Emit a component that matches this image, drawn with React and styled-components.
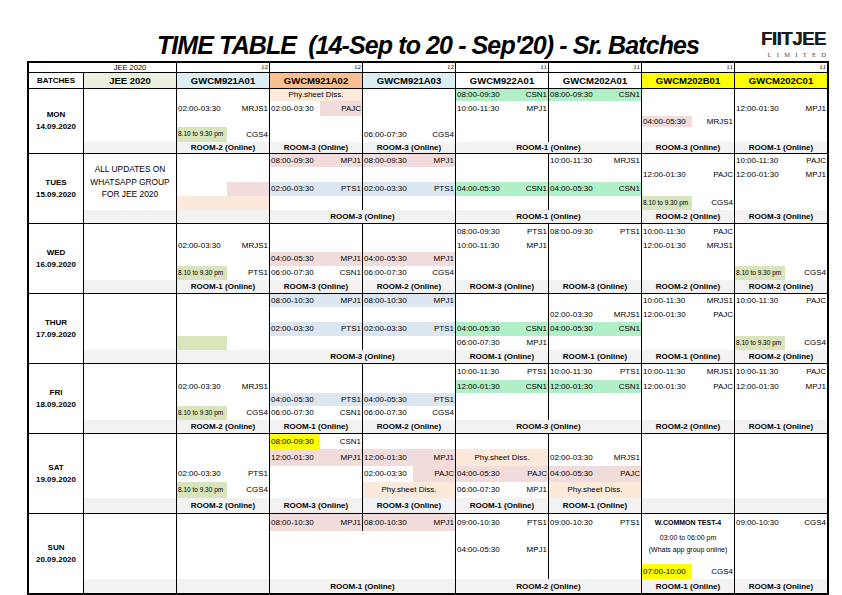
import React from 'react';
import styled, { createGlobalStyle } from 'styled-components';

const GlobalStyle = createGlobalStyle`
  html, body { margin: 0; padding: 0; background: #fff; }
  body { font-family: 'Liberation Sans', Arial, sans-serif; color: #000; }
  * { box-sizing: border-box; }
`;

const PINK = '#f2dcdb';
const BLUE = '#dce6f1';
const GREEN = '#b1efc6';
const PEACH = '#fde9d9';
const OLIVE = '#d7e4bc';
const YELLOW = '#ffff00';
const GREY = '#f2f2f2';
const LINE = '1px solid #000';

const COLS = '55px 93px 93px 93px 93px 93px 93px 93px 92px';

const Page = styled.div`
  width: 842px;
  height: 595px;
  overflow: hidden;
  padding-left: 27px;
`;

const TitleBar = styled.header`
  width: 802px;
  height: 61px;
  display: grid;
  grid-template-columns: 1fr auto 1fr;
`;

const Title = styled.h1`
  grid-column: 2;
  align-self: end;
  margin: 0 0 3px;
  font-size: 25px;
  line-height: 25px;
  font-weight: 700;
  font-style: italic;
  letter-spacing: -0.9px;
  white-space: pre;
`;

const Logo = styled.div`
  grid-column: 3;
  justify-self: end;
  align-self: start;
  margin: 30px 3px 0 0;
  display: flex;
  flex-direction: column;
  align-items: flex-end;
`;

const LogoMark = styled.span`
  font-size: 18.5px;
  line-height: 17px;
  font-weight: 700;
  letter-spacing: -0.4px;
  color: #1c1c1c;
  text-shadow: 0.3px 0 0 #1c1c1c;
`;

const LogoSub = styled.span`
  font-family: 'Liberation Serif', serif;
  font-size: 6.5px;
  line-height: 7px;
  letter-spacing: 5.3px;
  margin-top: 4px;
  margin-right: -5.3px;
  color: #444;
`;

const Table = styled.div`
  width: 802px;
  border: 2px solid #000;
`;

const TopRow = styled.div`
  display: grid;
  grid-template-columns: ${COLS};
  height: 10px;
  border-bottom: ${LINE};
`;

const TopCell = styled.div`
  border-right: ${(p) => (p.$line ? LINE : 'none')};
  font-family: 'Liberation Serif', serif;
  font-size: 7px;
  line-height: 9px;
  text-align: right;
  padding-right: 1px;
`;

const TopLabel = styled.div`
  border-right: ${LINE};
  font-size: 7.5px;
  line-height: 9px;
  text-align: center;
`;

const HeaderRow = styled.div`
  display: grid;
  grid-template-columns: ${COLS};
  height: 15px;
`;

const HeadCell = styled.div`
  display: flex;
  align-items: center;
  justify-content: center;
  background: ${(p) => p.$bg || '#fff'};
  border-right: ${(p) => (p.$last ? 'none' : LINE)};
  font-weight: 700;
  font-size: ${(p) => p.$size || 9.5}px;
  white-space: nowrap;
`;

const DayGrid = styled.section`
  display: grid;
  grid-template-columns: ${COLS};
  grid-template-rows: ${(p) => p.$rows};
  border-top: ${LINE};
`;

const DayCell = styled.div`
  grid-column: 1;
  grid-row: 1 / -1;
  border-right: ${LINE};
  display: flex;
  flex-direction: column;
  align-items: center;
  justify-content: center;
  font-weight: 700;
  font-size: 8px;
  line-height: 12px;
`;

const JeeCell = styled.div`
  grid-column: 2;
  grid-row: 1 / ${(p) => p.$end};
  border-right: ${LINE};
  display: flex;
  flex-direction: column;
  align-items: center;
  justify-content: center;
  font-size: 8.4px;
  line-height: 12.5px;
  text-align: center;
`;

const JeeRoom = styled.div`
  grid-column: 2;
  grid-row: ${(p) => p.$row};
  background: ${GREY};
  border-right: ${LINE};
`;

const BatchCol = styled.div`
  grid-column: ${(p) => p.$col};
  grid-row: 1 / ${(p) => p.$end};
  display: grid;
  grid-template-rows: ${(p) => p.$rows};
  min-width: 0;
`;

const Slot = styled.div`
  display: grid;
  grid-template-columns: 50px 1fr;
  background: ${(p) => p.$bg || 'transparent'};
  border-right: ${(p) => (p.$divider ? LINE : 'none')};
  overflow: hidden;
  min-height: 0;
`;

const TimePart = styled.span`
  display: flex;
  align-items: center;
  padding-left: 1px;
  background: ${(p) => p.$bg || 'transparent'};
  font-size: ${(p) => (p.$small ? '6.5px' : '8px')};
  line-height: 1;
  white-space: nowrap;
  overflow: hidden;
`;

const WhoPart = styled.span`
  display: flex;
  align-items: center;
  justify-content: flex-end;
  padding-right: 1px;
  background: ${(p) => p.$bg || 'transparent'};
  font-size: 8px;
  line-height: 1;
  white-space: nowrap;
`;

const Centered = styled.span`
  grid-column: 1 / -1;
  display: flex;
  align-items: center;
  justify-content: center;
  font-size: ${(p) => p.$size || 8}px;
  font-weight: ${(p) => (p.$bold ? 700 : 400)};
  line-height: 1;
  white-space: nowrap;
`;

const RoomCell = styled.div`
  grid-column: ${(p) => p.$start} / span ${(p) => p.$span};
  grid-row: ${(p) => p.$row};
  background: ${GREY};
  border-right: ${(p) => (p.$last ? 'none' : LINE)};
  display: flex;
  align-items: center;
  justify-content: center;
  font-weight: 700;
  font-size: 8px;
  white-space: nowrap;
`;

const T = (time, who, opt = {}) => ({ kind: 'time', time, who, ...opt });
const C = (text, opt = {}) => ({ kind: 'center', text, ...opt });
const OL = (who) => T('8.10 to 9.30 pm', who, { lb: OLIVE, small: true });
const R = (text, span = 1) => ({ text, span });
const col = (slots, div) => ({ slots, div });

const BATCHES = [
  { name: 'GWCM921A01', bg: '#daeef3', num: 12 },
  { name: 'GWCM921A02', bg: '#fabf8f', num: 12 },
  { name: 'GWCM921A03', bg: '#daeef3', num: 12 },
  { name: 'GWCM922A01', bg: '#fff', num: 11 },
  { name: 'GWCM202A01', bg: '#fff', num: 11 },
  { name: 'GWCM202B01', bg: YELLOW, num: 11 },
  { name: 'GWCM202C01', bg: YELLOW, num: 11 },
];

const DAYS = [
  {
    day: 'MON', date: '14.09.2020', rows: [12, 15, 11, 15, 11],
    cols: [
      col([null, T('02:00-03:30', 'MRJS1'), null, OL('CGS4')]),
      col([C('Phy.sheet Diss.', { bg: PEACH }), T('02:00-03:30', 'PAJC', { rb: PINK }), null, null]),
      col([null, null, null, T('06:00-07:30', 'CGS4')]),
      col([T('08:00-09:30', 'CSN1', { bg: GREEN }), T('10:00-11:30', 'MPJ1'), null, null]),
      col([T('08:00-09:30', 'CSN1', { bg: GREEN }), null, null, null]),
      col([null, null, T('04:00-05:30', 'MRJS1', { lb: PINK }), null]),
      col([null, T('12:00-01:30', 'MPJ1'), null, null]),
    ],
    rooms: [R('ROOM-2 (Online)'), R('ROOM-3 (Online)'), R('ROOM-3 (Online)'), R('ROOM-1 (Online)', 2), R('ROOM-3 (Online)'), R('ROOM-1 (Online)')],
  },
  {
    day: 'TUES', date: '15.09.2020', rows: [13, 15, 14, 14, 13],
    jee: ['ALL UPDATES ON', 'WHATSAPP GROUP', 'FOR JEE 2020'],
    cols: [
      col([null, null, T('', '', { rb: PINK }), T('', '', { bg: PEACH })]),
      col([T('08:00-09:30', 'MPJ1', { bg: PINK }), null, T('02:00-03:30', 'PTS1', { bg: BLUE }), null]),
      col([T('08:00-09:30', 'MPJ1', { bg: PINK }), null, T('02:00-03:30', 'PTS1', { bg: BLUE }), null]),
      col([null, null, T('04:00-05:30', 'CSN1', { bg: GREEN }), null]),
      col([T('10:00-11:30', 'MRJS1'), null, T('04:00-05:30', 'CSN1', { bg: GREEN }), null]),
      col([null, T('12:00-01:30', 'PAJC'), null, OL('CGS4')]),
      col([T('10:00-11:30', 'PAJC'), T('12:00-01:30', 'MPJ1'), null, null]),
    ],
    rooms: [R(''), R('ROOM-3 (Online)', 2), R('ROOM-1 (Online)', 2), R('ROOM-2 (Online)'), R('ROOM-3 (Online)')],
  },
  {
    day: 'WED', date: '16.09.2020', rows: [15, 13, 14, 14, 13],
    cols: [
      col([null, T('02:00-03:30', 'MRJS1'), null, OL('PTS1')]),
      col([null, null, T('04:00-05:30', 'MPJ1', { bg: PINK }), T('06:00-07:30', 'CSN1')]),
      col([null, null, T('04:00-05:30', 'MPJ1', { bg: PINK }), T('06:00-07:30', 'CGS4')]),
      col([T('08:00-09:30', 'PTS1'), T('10:00-11:30', 'MPJ1'), null, null]),
      col([T('08:00-09:30', 'PTS1'), null, null, null]),
      col([T('10:00-11:30', 'PAJC'), T('12:00-01:30', 'MRJS1'), null, null]),
      col([null, null, null, OL('CGS4')]),
    ],
    rooms: [R('ROOM-1 (Online)'), R('ROOM-3 (Online)'), R('ROOM-2 (Online)'), R('ROOM-3 (Online)'), R('ROOM-3 (Online)'), R('ROOM-2 (Online)'), R('ROOM-2 (Online)')],
  },
  {
    day: 'THUR', date: '17.09.2020', rows: [13, 15, 14, 14, 13],
    cols: [
      col([null, null, null, T('', '', { lb: OLIVE })]),
      col([T('08:00-10:30', 'MPJ1', { bg: BLUE }), null, T('02:00-03:30', 'PTS1', { bg: BLUE }), null]),
      col([T('08:00-10:30', 'MPJ1', { bg: BLUE }), null, T('02:00-03:30', 'PTS1', { bg: BLUE }), null]),
      col([null, null, T('04:00-05:30', 'CSN1', { bg: GREEN }), T('06:00-07:30', 'MPJ1')]),
      col([null, T('02:00-03:30', 'MRJS1'), T('04:00-05:30', 'CSN1', { bg: GREEN }), null]),
      col([T('10:00-11:30', 'MRJS1'), T('12:00-01:30', 'PAJC'), null, null]),
      col([T('10:00-11:30', 'PAJC'), null, null, OL('CGS4')]),
    ],
    rooms: [R(''), R('ROOM-3 (Online)', 2), R('ROOM-1 (Online)'), R('ROOM-1 (Online)'), R('ROOM-1 (Online)'), R('ROOM-2 (Online)')],
  },
  {
    day: 'FRI', date: '18.09.2020', rows: [16, 13, 13, 14, 13],
    cols: [
      col([null, T('02:00-03:30', 'MRJS1'), null, OL('CGS4')]),
      col([null, null, T('04:00-05:30', 'PTS1', { bg: BLUE }), T('06:00-07:30', 'CSN1')]),
      col([null, null, T('04:00-05:30', 'PTS1', { bg: BLUE }), T('06:00-07:30', 'CGS4')]),
      col([T('10:00-11:30', 'PTS1'), T('12:00-01:30', 'CSN1', { bg: GREEN }), null, null]),
      col([T('10:00-11:30', 'PTS1'), T('12:00-01:30', 'CSN1', { bg: GREEN }), null, null]),
      col([T('10:00-11:30', 'MRJS1'), T('12:00-01:30', 'PAJC'), null, null]),
      col([T('10:00-11:30', 'PAJC'), T('12:00-01:30', 'MPJ1'), null, null]),
    ],
    rooms: [R('ROOM-2 (Online)'), R('ROOM-1 (Online)'), R('ROOM-2 (Online)'), R('ROOM-3 (Online)', 2), R('ROOM-2 (Online)'), R('ROOM-1 (Online)')],
  },
  {
    day: 'SAT', date: '19.09.2020', rows: [15, 17, 16, 16, 15],
    cols: [
      col([null, null, T('02:00-03:30', 'PTS1'), OL('CGS4')]),
      col([T('08:00-09:30', 'CSN1', { lb: YELLOW }), T('12:00-01:30', 'MPJ1', { bg: PINK }), null, null]),
      col([null, T('12:00-01:30', 'MPJ1', { bg: PINK }), T('02:00-03:30', 'PAJC', { rb: PINK }), C('Phy.sheet Diss.', { bg: PEACH })]),
      col([null, C('Phy.sheet Diss.', { bg: PEACH }), T('04:00-05:30', 'PAJC', { bg: PINK }), T('06:00-07:30', 'MPJ1')]),
      col([null, T('02:00-03:30', 'MRJS1'), T('04:00-05:30', 'PAJC', { bg: PINK }), C('Phy.sheet Diss.', { bg: PEACH })]),
      col([null, null, null, null]),
      col([null, null, null, null]),
    ],
    rooms: [R('ROOM-2 (Online)'), R('ROOM-3 (Online)'), R('ROOM-3 (Online)'), R('ROOM-1 (Online)'), R('ROOM-1 (Online)'), R(''), R('')],
  },
  {
    day: 'SUN', date: '20.09.2020', rows: [17, 12, 13, 8, 15, 14],
    cols: [
      col([null, null, null, null, null]),
      col([T('08:00-10:30', 'MPJ1', { bg: PINK }), null, null, null, null], 1),
      col([T('08:00-10:30', 'MPJ1', { bg: PINK }), null, null, null, null]),
      col([T('09:00-10:30', 'PTS1'), null, T('04:00-05:30', 'MPJ1'), null, null]),
      col([T('09:00-10:30', 'PTS1'), null, null, null, null]),
      col([
        C('W.COMMON TEST-4', { bold: true, size: 7 }),
        C('03:00 to 06:00 pm', { size: 7 }),
        C('(Whats app group online)', { size: 7 }),
        null,
        T('07:00-10:00', 'CGS4', { lb: YELLOW }),
      ]),
      col([T('09:00-10:30', 'CGS4'), null, null, null, null]),
    ],
    rooms: [R(''), R('ROOM-1 (Online)', 2), R('ROOM-2 (Online)', 2), R('ROOM-1 (Online)'), R('ROOM-3 (Online)')],
  },
];

function SlotView({ s, divider }) {
  if (!s) return <Slot $divider={divider} />;
  if (s.kind === 'center') {
    return (
      <Slot $divider={divider} $bg={s.bg}>
        <Centered $bold={s.bold} $size={s.size}>{s.text}</Centered>
      </Slot>
    );
  }
  return (
    <Slot $divider={divider} $bg={s.bg}>
      <TimePart $bg={s.lb} $small={s.small}>{s.time}</TimePart>
      <WhoPart $bg={s.rb}>{s.who}</WhoPart>
    </Slot>
  );
}

function DayBlock({ d }) {
  const n = d.rows.length;
  const tmpl = d.rows.map((h) => `${h}px`).join(' ');
  const slotTmpl = d.rows.slice(0, -1).map((h) => `${h}px`).join(' ');
  let start = 3;
  const rooms = d.rooms.map((r, i) => {
    const el = (
      <RoomCell key={i} $start={start} $span={r.span} $row={n} $last={start + r.span - 1 === 9}>
        {r.text}
      </RoomCell>
    );
    start += r.span;
    return el;
  });
  return (
    <DayGrid $rows={tmpl}>
      <DayCell>
        <span>{d.day}</span>
        <span>{d.date}</span>
      </DayCell>
      <JeeCell $end={n}>
        {d.jee && d.jee.map((l) => <span key={l}>{l}</span>)}
      </JeeCell>
      <JeeRoom $row={n} />
      {d.cols.map((c, i) => (
        <BatchCol key={i} $col={i + 3} $end={n} $rows={slotTmpl}>
          {c.slots.map((s, r) => (
            <SlotView key={r} s={s} divider={i < 6 && r < (c.div ?? 99)} />
          ))}
        </BatchCol>
      ))}
      {rooms}
    </DayGrid>
  );
}

export default function App() {
  return (
    <Page>
      <GlobalStyle />
      <TitleBar>
        <Title>{"TIME TABLE  (14-Sep to 20 - Sep'20) - Sr. Batches"}</Title>
        <Logo>
          <LogoMark>FIITJEE</LogoMark>
          <LogoSub>LIMITED</LogoSub>
        </Logo>
      </TitleBar>
      <Table>
        <TopRow>
          <TopCell />
          <TopLabel>JEE 2020</TopLabel>
          {BATCHES.map((b, i) => (
            <TopCell key={b.name} $line={i < 6}>{b.num}</TopCell>
          ))}
        </TopRow>
        <HeaderRow>
          <HeadCell $size={8}>BATCHES</HeadCell>
          <HeadCell $bg="#ebf1de">JEE 2020</HeadCell>
          {BATCHES.map((b, i) => (
            <HeadCell key={b.name} $bg={b.bg} $last={i === 6}>{b.name}</HeadCell>
          ))}
        </HeaderRow>
        {DAYS.map((d) => (
          <DayBlock key={d.day} d={d} />
        ))}
      </Table>
    </Page>
  );
}
